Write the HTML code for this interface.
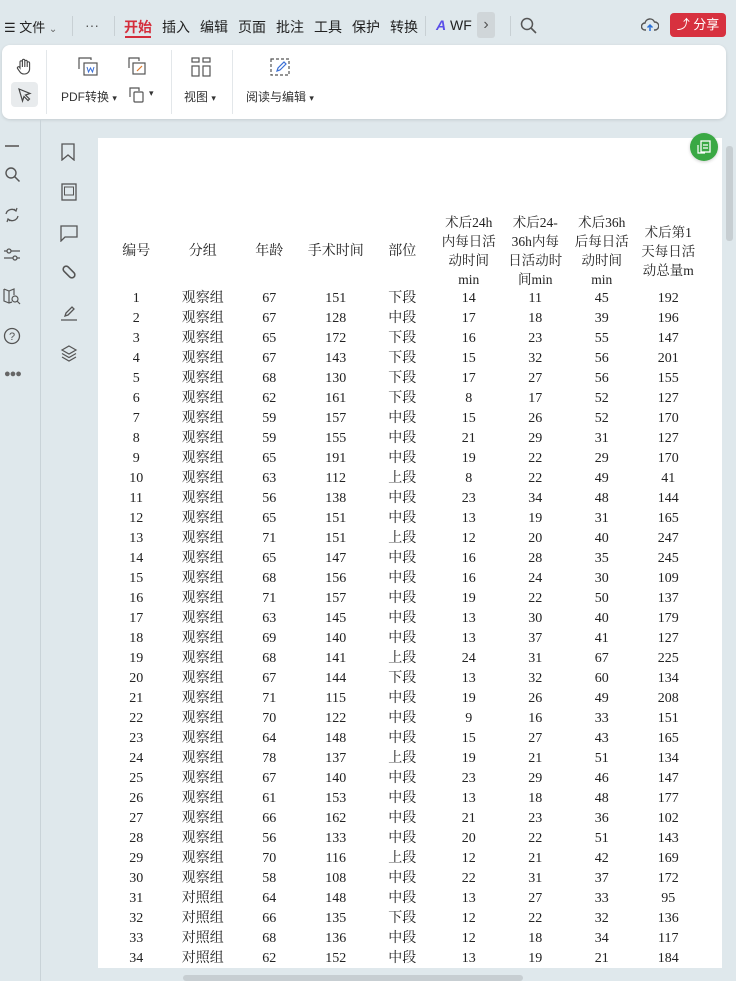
<!DOCTYPE html>
<html><head><meta charset="utf-8"><style>
*{margin:0;padding:0;box-sizing:border-box}
body{width:736px;height:981px;overflow:hidden;background:#dfe8ec;font-family:"Liberation Sans","Noto Sans CJK SC",sans-serif;color:#333;position:relative}
.abs{position:absolute}
.tab{position:absolute;top:17px;font-size:14px;color:#222}
.tb{position:absolute;top:45px;left:2px;width:724px;height:74px;background:#fff;border-radius:8px;box-shadow:0 1px 3px rgba(0,0,0,.12)}
.lbl{position:absolute;font-size:12px;color:#333}
.sep{position:absolute;width:1px;background:#e3e7ea}
.page{position:absolute;left:98px;top:138px;width:624px;height:830px;background:#fff}
table{position:absolute;left:5px;top:0;width:598px;table-layout:fixed;border-collapse:collapse;font-family:"Liberation Serif","Noto Serif CJK SC",serif;font-size:14px;color:#222}
td{width:66.5px;text-align:center;height:20px;line-height:20px;padding:0;white-space:nowrap;overflow:visible}
.hd td{line-height:19px;font-size:13.5px;white-space:normal;vertical-align:middle}
svg{position:absolute}
</style></head><body>
<div class="tab" style="left:4px;font-size:13px">☰ 文件 <span style="font-size:10px;color:#666">⌄</span></div>
<div class="sep" style="left:72px;top:16px;height:20px;background:#c8d0d4"></div>
<div class="tab" style="left:85px;color:#555">···</div>
<div class="sep" style="left:114px;top:16px;height:20px;background:#c8d0d4"></div>
<div class="tab" style="left:124px;color:#d42d3b;font-weight:bold">开始</div>
<div class="abs" style="left:125px;top:36px;width:26px;height:2px;background:#d42d3b"></div>
<div class="tab" style="left:162px">插入</div>
<div class="tab" style="left:200px">编辑</div>
<div class="tab" style="left:238px">页面</div>
<div class="tab" style="left:276px">批注</div>
<div class="tab" style="left:314px">工具</div>
<div class="tab" style="left:352px">保护</div>
<div class="tab" style="left:390px">转换</div>
<div class="sep" style="left:425px;top:16px;height:20px;background:#c8d0d4"></div>
<div class="tab" style="left:436px;"><span style="color:#5a4ee8;font-weight:bold;font-style:italic">A</span> WF</div>
<div class="abs" style="left:477px;top:12px;width:18px;height:26px;background:#d0d6d9;border-radius:3px;text-align:center;line-height:26px;color:#555">›</div>
<div class="sep" style="left:510px;top:16px;height:20px;background:#c8d0d4"></div>
<svg style="left:520px;top:17px" width="18" height="18" viewBox="0 0 18 18"><circle cx="7" cy="7" r="5.5" fill="none" stroke="#555" stroke-width="1.5"/><path d="M11 11l5 5" stroke="#555" stroke-width="1.6"/></svg>
<svg style="left:641px;top:17px" width="18" height="16" viewBox="0 0 18 16"><path d="M5 13H4a3.5 3.5 0 0 1 0-7 5 5 0 0 1 9.5-1A4 4 0 0 1 14 13h-1" fill="none" stroke="#555" stroke-width="1.4"/><path d="M9 14V8M6.5 10.5 9 8l2.5 2.5" stroke="#2a6fd6" stroke-width="1.5" fill="none"/></svg>
<div class="abs" style="left:670px;top:13px;width:56px;height:24px;background:#d7313f;border-radius:4px;color:#fff;font-size:13px;line-height:24px;text-align:center">⤴ 分享</div>
<div class="tb">
<svg style="left:13px;top:13px" width="18" height="18" viewBox="0 0 18 18"><path d="M5 10V4a1.2 1.2 0 0 1 2.4 0v5V2.5a1.2 1.2 0 0 1 2.4 0V9V3.5a1.2 1.2 0 0 1 2.4 0V9V5a1.2 1.2 0 0 1 2.4 0v6a5 5 0 0 1-5 5H9a5 5 0 0 1-4-2L2.5 10.5a1.2 1.2 0 0 1 2-1.3z" fill="none" stroke="#444" stroke-width="1.1"/></svg>
<div class="abs" style="left:9px;top:37px;width:27px;height:25px;background:#e8ebed;border-radius:4px"></div>
<svg style="left:15px;top:42px" width="16" height="16" viewBox="0 0 16 16"><path d="M2 2l11 4.5-4.5 1.5 4 4-1.5 1.5-4-4L5.5 14z" fill="none" stroke="#444" stroke-width="1.2"/></svg>
<div class="sep" style="left:44px;top:5px;height:64px"></div>
<svg style="left:76px;top:12px" width="22" height="20" viewBox="0 0 22 20"><path d="M1 12V1h12v2" fill="none" stroke="#555" stroke-width="1.2"/><rect x="6" y="6" width="13" height="12" fill="none" stroke="#555" stroke-width="1.2"/><path d="M9 10l1.5 5 2-4 2 4L16 10" fill="none" stroke="#3a6fd6" stroke-width="1"/></svg>
<div class="lbl" style="left:59px;top:43px">PDF转换 <span style="font-size:9px">▾</span></div>
<svg style="left:126px;top:12px" width="20" height="20" viewBox="0 0 20 20"><path d="M1 11V1h10v3" fill="none" stroke="#555" stroke-width="1.2"/><rect x="5" y="6" width="12" height="11" fill="none" stroke="#555" stroke-width="1.2"/><path d="M9 14l5-5" stroke="#e07a2a" stroke-width="1.2"/></svg>
<svg style="left:127px;top:42px" width="16" height="16" viewBox="0 0 16 16"><path d="M1 10V1h9v3" fill="none" stroke="#555" stroke-width="1.2"/><rect x="5" y="5" width="9" height="10" rx="1" fill="none" stroke="#555" stroke-width="1.2"/></svg>
<div class="lbl" style="left:147px;top:43px;font-size:9px">▾</div>
<div class="sep" style="left:169px;top:5px;height:64px"></div>
<svg style="left:189px;top:12px" width="20" height="20" viewBox="0 0 20 20"><rect x="1" y="1" width="7" height="4" fill="none" stroke="#555" stroke-width="1.2"/><rect x="12" y="1" width="7" height="4" fill="none" stroke="#555" stroke-width="1.2"/><rect x="1" y="9" width="7" height="10" fill="none" stroke="#555" stroke-width="1.2"/><rect x="12" y="9" width="7" height="10" fill="none" stroke="#555" stroke-width="1.2"/></svg>
<div class="lbl" style="left:182px;top:43px">视图 <span style="font-size:9px">▾</span></div>
<div class="sep" style="left:230px;top:5px;height:64px"></div>
<svg style="left:267px;top:12px" width="22" height="20" viewBox="0 0 22 20"><rect x="2" y="2" width="18" height="16" fill="none" stroke="#555" stroke-width="1.2" stroke-dasharray="3 2"/><path d="M8 14l1-3 6-6 2 2-6 6z" fill="none" stroke="#3a6fd6" stroke-width="1.2"/></svg>
<div class="lbl" style="left:244px;top:43px">阅读与编辑 <span style="font-size:9px">▾</span></div>
</div>
<div class="abs" style="left:40px;top:120px;width:1px;height:861px;background:#c9d3d8"></div>
<div class="abs" style="left:5px;top:145px;width:14px;height:1.5px;background:#777"></div>
<svg style="left:4px;top:166px" width="18" height="18" viewBox="0 0 18 18"><circle cx="7" cy="7" r="5" fill="none" stroke="#555" stroke-width="1.4"/><path d="M10.5 10.5l5 5" stroke="#555" stroke-width="1.5"/></svg>
<svg style="left:3px;top:206px" width="18" height="18" viewBox="0 0 18 18"><path d="M3 8a6 6 0 0 1 10-3M15 10a6 6 0 0 1-10 3" fill="none" stroke="#555" stroke-width="1.3"/><path d="M11 3l2 2 1-3M7 15l-2-2-1 3" fill="none" stroke="#555" stroke-width="1.2"/></svg>
<svg style="left:3px;top:246px" width="18" height="18" viewBox="0 0 18 18"><path d="M1 5h16M1 12h16" stroke="#555" stroke-width="1.3"/><circle cx="6" cy="5" r="2" fill="#dfe8ec" stroke="#555" stroke-width="1.3"/><circle cx="12" cy="12" r="2" fill="#dfe8ec" stroke="#555" stroke-width="1.3"/></svg>
<svg style="left:3px;top:287px" width="18" height="18" viewBox="0 0 18 18"><path d="M1 2l5 2 5-2v6M1 2v12l5 2 3-1M6 4v12" fill="none" stroke="#555" stroke-width="1.2"/><circle cx="12" cy="12" r="3" fill="none" stroke="#555" stroke-width="1.2"/><path d="M14 14l3 3" stroke="#555" stroke-width="1.2"/></svg>
<svg style="left:3px;top:327px" width="18" height="18" viewBox="0 0 18 18"><circle cx="9" cy="9" r="7.5" fill="none" stroke="#555" stroke-width="1.3"/><text x="9" y="13" font-size="11" text-anchor="middle" fill="#555" font-family="Liberation Sans">?</text></svg>
<div class="abs" style="left:4px;top:368px;font-size:11px;color:#666;letter-spacing:-1px">●●●</div>
<svg style="left:60px;top:143px" width="16" height="18" viewBox="0 0 16 18"><path d="M2 1h12v16l-6-5-6 5z" fill="none" stroke="#555" stroke-width="1.3"/></svg>
<svg style="left:61px;top:183px" width="16" height="18" viewBox="0 0 16 18"><rect x="1" y="1" width="14" height="16" fill="none" stroke="#555" stroke-width="1.3"/><rect x="3.5" y="4" width="9" height="8" fill="none" stroke="#555" stroke-width="1"/></svg>
<svg style="left:60px;top:224px" width="18" height="18" viewBox="0 0 18 18"><path d="M1 2h16v11H5l-4 4z" fill="none" stroke="#555" stroke-width="1.3"/></svg>
<svg style="left:60px;top:263px" width="18" height="18" viewBox="0 0 18 18"><rect x="2" y="6" width="14" height="6" rx="3" transform="rotate(45 9 9)" fill="none" stroke="#555" stroke-width="1.6"/></svg>
<svg style="left:60px;top:304px" width="18" height="18" viewBox="0 0 18 18"><path d="M5 12l1-3 6-6 2 2-6 6zM1 16h16" fill="none" stroke="#555" stroke-width="1.3"/></svg>
<svg style="left:60px;top:344px" width="18" height="18" viewBox="0 0 18 18"><path d="M9 2l7 4-7 4-7-4zM2 9.5l7 4 7-4M2 13l7 4 7-4" fill="none" stroke="#555" stroke-width="1.2"/></svg>
<div class="page">
<table style="top:75px">
<tr class="hd" style="height:75px"><td style="font-size:14px">编号</td><td style="font-size:14px">分组</td><td style="font-size:14px">年龄</td><td style="font-size:14px">手术时间</td><td style="font-size:14px">部位</td><td>术后24h<br>内每日活<br>动时间<br>min</td><td>术后24-<br>36h内每<br>日活动时<br>间min</td><td>术后36h<br>后每日活<br>动时间<br>min</td><td>术后第1<br>天每日活<br>动总量m</td></tr>
<tr><td>1</td><td>观察组</td><td>67</td><td>151</td><td>下段</td><td>14</td><td>11</td><td>45</td><td>192</td></tr>
<tr><td>2</td><td>观察组</td><td>67</td><td>128</td><td>中段</td><td>17</td><td>18</td><td>39</td><td>196</td></tr>
<tr><td>3</td><td>观察组</td><td>65</td><td>172</td><td>下段</td><td>16</td><td>23</td><td>55</td><td>147</td></tr>
<tr><td>4</td><td>观察组</td><td>67</td><td>143</td><td>下段</td><td>15</td><td>32</td><td>56</td><td>201</td></tr>
<tr><td>5</td><td>观察组</td><td>68</td><td>130</td><td>下段</td><td>17</td><td>27</td><td>56</td><td>155</td></tr>
<tr><td>6</td><td>观察组</td><td>62</td><td>161</td><td>下段</td><td>8</td><td>17</td><td>52</td><td>127</td></tr>
<tr><td>7</td><td>观察组</td><td>59</td><td>157</td><td>中段</td><td>15</td><td>26</td><td>52</td><td>170</td></tr>
<tr><td>8</td><td>观察组</td><td>59</td><td>155</td><td>中段</td><td>21</td><td>29</td><td>31</td><td>127</td></tr>
<tr><td>9</td><td>观察组</td><td>65</td><td>191</td><td>中段</td><td>19</td><td>22</td><td>29</td><td>170</td></tr>
<tr><td>10</td><td>观察组</td><td>63</td><td>112</td><td>上段</td><td>8</td><td>22</td><td>49</td><td>41</td></tr>
<tr><td>11</td><td>观察组</td><td>56</td><td>138</td><td>中段</td><td>23</td><td>34</td><td>48</td><td>144</td></tr>
<tr><td>12</td><td>观察组</td><td>65</td><td>151</td><td>中段</td><td>13</td><td>19</td><td>31</td><td>165</td></tr>
<tr><td>13</td><td>观察组</td><td>71</td><td>151</td><td>上段</td><td>12</td><td>20</td><td>40</td><td>247</td></tr>
<tr><td>14</td><td>观察组</td><td>65</td><td>147</td><td>中段</td><td>16</td><td>28</td><td>35</td><td>245</td></tr>
<tr><td>15</td><td>观察组</td><td>68</td><td>156</td><td>中段</td><td>16</td><td>24</td><td>30</td><td>109</td></tr>
<tr><td>16</td><td>观察组</td><td>71</td><td>157</td><td>中段</td><td>19</td><td>22</td><td>50</td><td>137</td></tr>
<tr><td>17</td><td>观察组</td><td>63</td><td>145</td><td>中段</td><td>13</td><td>30</td><td>40</td><td>179</td></tr>
<tr><td>18</td><td>观察组</td><td>69</td><td>140</td><td>中段</td><td>13</td><td>37</td><td>41</td><td>127</td></tr>
<tr><td>19</td><td>观察组</td><td>68</td><td>141</td><td>上段</td><td>24</td><td>31</td><td>67</td><td>225</td></tr>
<tr><td>20</td><td>观察组</td><td>67</td><td>144</td><td>下段</td><td>13</td><td>32</td><td>60</td><td>134</td></tr>
<tr><td>21</td><td>观察组</td><td>71</td><td>115</td><td>中段</td><td>19</td><td>26</td><td>49</td><td>208</td></tr>
<tr><td>22</td><td>观察组</td><td>70</td><td>122</td><td>中段</td><td>9</td><td>16</td><td>33</td><td>151</td></tr>
<tr><td>23</td><td>观察组</td><td>64</td><td>148</td><td>中段</td><td>15</td><td>27</td><td>43</td><td>165</td></tr>
<tr><td>24</td><td>观察组</td><td>78</td><td>137</td><td>上段</td><td>19</td><td>21</td><td>51</td><td>134</td></tr>
<tr><td>25</td><td>观察组</td><td>67</td><td>140</td><td>中段</td><td>23</td><td>29</td><td>46</td><td>147</td></tr>
<tr><td>26</td><td>观察组</td><td>61</td><td>153</td><td>中段</td><td>13</td><td>18</td><td>48</td><td>177</td></tr>
<tr><td>27</td><td>观察组</td><td>66</td><td>162</td><td>中段</td><td>21</td><td>23</td><td>36</td><td>102</td></tr>
<tr><td>28</td><td>观察组</td><td>56</td><td>133</td><td>中段</td><td>20</td><td>22</td><td>51</td><td>143</td></tr>
<tr><td>29</td><td>观察组</td><td>70</td><td>116</td><td>上段</td><td>12</td><td>21</td><td>42</td><td>169</td></tr>
<tr><td>30</td><td>观察组</td><td>58</td><td>108</td><td>中段</td><td>22</td><td>31</td><td>37</td><td>172</td></tr>
<tr><td>31</td><td>对照组</td><td>64</td><td>148</td><td>中段</td><td>13</td><td>27</td><td>33</td><td>95</td></tr>
<tr><td>32</td><td>对照组</td><td>66</td><td>135</td><td>下段</td><td>12</td><td>22</td><td>32</td><td>136</td></tr>
<tr><td>33</td><td>对照组</td><td>68</td><td>136</td><td>中段</td><td>12</td><td>18</td><td>34</td><td>117</td></tr>
<tr><td>34</td><td>对照组</td><td>62</td><td>152</td><td>中段</td><td>13</td><td>19</td><td>21</td><td>184</td></tr>
</table>
</div>
<div class="abs" style="left:690px;top:133px;width:28px;height:28px;border-radius:50%;background:#3aa844;box-shadow:0 1px 3px rgba(0,0,0,.2)"></div>
<svg style="left:696px;top:139px" width="16" height="16" viewBox="0 0 16 16"><rect x="5" y="2" width="9" height="11" fill="none" stroke="#fff" stroke-width="1.3"/><path d="M2 6v8h7M7 6h5M7 9h5" stroke="#fff" stroke-width="1.2" fill="none"/></svg>
<div class="abs" style="left:726px;top:146px;width:7px;height:95px;background:#c7ced2;border-radius:3px"></div>
<div class="abs" style="left:183px;top:975px;width:340px;height:6px;background:#c7ced2;border-radius:3px"></div>
</body></html>
